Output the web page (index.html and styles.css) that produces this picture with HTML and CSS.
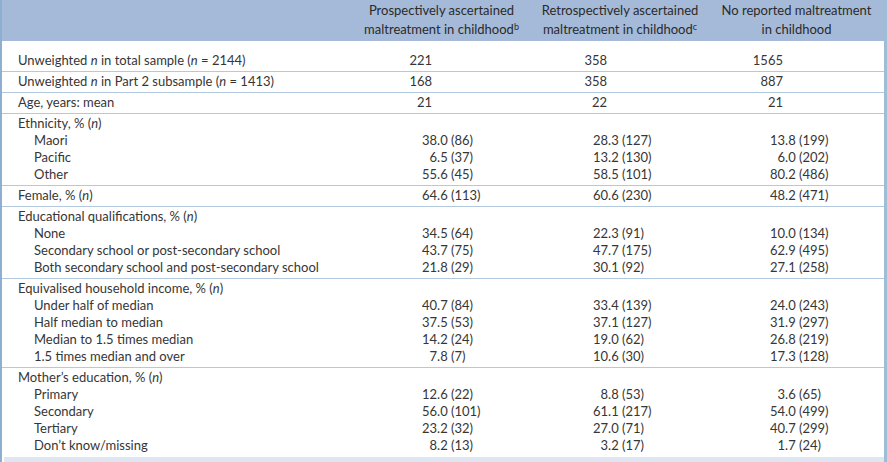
FILE: index.html
```html
<!DOCTYPE html>
<html>
<head>
<meta charset="utf-8">
<link rel="stylesheet" href="styles.css">
</head>
<body>
<div class="frame">
<table class="tbl">
<colgroup><col class="w1"><col class="w2"><col class="w3"><col class="w4"></colgroup>
<thead>
<tr>
<th class="lab"></th>
<th>Prospectively ascertained<br>maltreatment in childhood<sup>b</sup></th>
<th>Retrospectively ascertained<br>maltreatment in childhood<sup>c</sup></th>
<th>No reported maltreatment<br>in childhood</th>
</tr>
</thead>
<tbody>
<tr class="g first"><td class="lab">Unweighted <i>n</i> in total sample (<i>n</i> = 2144)</td><td class="n c2">221</td><td class="n c3">358</td><td class="n c4">1565</td></tr>
<tr class="g"><td class="lab">Unweighted <i>n</i> in Part 2 subsample (<i>n</i> = 1413)</td><td class="n c2">168</td><td class="n c3">358</td><td class="n c4">887</td></tr>
<tr class="g"><td class="lab">Age, years: mean</td><td class="n c2">21</td><td class="n c3">22</td><td class="n c4">21</td></tr>

<tr class="g gs"><td class="lab">Ethnicity, % (<i>n</i>)</td><td></td><td></td><td></td></tr>
<tr class="s"><td class="lab sub">Maori</td><td class="p c2">38.0 (86)</td><td class="p c3">28.3 (127)</td><td class="p c4">13.8 (199)</td></tr>
<tr class="s"><td class="lab sub">Pacific</td><td class="p c2">&#8199;6.5 (37)</td><td class="p c3">13.2 (130)</td><td class="p c4">&#8199;6.0 (202)</td></tr>
<tr class="s se"><td class="lab sub">Other</td><td class="p c2">55.6 (45)</td><td class="p c3">58.5 (101)</td><td class="p c4">80.2 (486)</td></tr>

<tr class="g"><td class="lab">Female, % (<i>n</i>)</td><td class="p c2">64.6 (113)</td><td class="p c3">60.6 (230)</td><td class="p c4">48.2 (471)</td></tr>

<tr class="g gs"><td class="lab">Educational qualifications, % (<i>n</i>)</td><td></td><td></td><td></td></tr>
<tr class="s"><td class="lab sub">None</td><td class="p c2">34.5 (64)</td><td class="p c3">22.3 (91)</td><td class="p c4">10.0 (134)</td></tr>
<tr class="s"><td class="lab sub">Secondary school or post-secondary school</td><td class="p c2">43.7 (75)</td><td class="p c3">47.7 (175)</td><td class="p c4">62.9 (495)</td></tr>
<tr class="s se"><td class="lab sub">Both secondary school and post-secondary school</td><td class="p c2">21.8 (29)</td><td class="p c3">30.1 (92)</td><td class="p c4">27.1 (258)</td></tr>

<tr class="g gs"><td class="lab">Equivalised household income, % (<i>n</i>)</td><td></td><td></td><td></td></tr>
<tr class="s"><td class="lab sub">Under half of median</td><td class="p c2">40.7 (84)</td><td class="p c3">33.4 (139)</td><td class="p c4">24.0 (243)</td></tr>
<tr class="s"><td class="lab sub">Half median to median</td><td class="p c2">37.5 (53)</td><td class="p c3">37.1 (127)</td><td class="p c4">31.9 (297)</td></tr>
<tr class="s"><td class="lab sub">Median to 1.5 times median</td><td class="p c2">14.2 (24)</td><td class="p c3">19.0 (62)</td><td class="p c4">26.8 (219)</td></tr>
<tr class="s se"><td class="lab sub">1.5 times median and over</td><td class="p c2">&#8199;7.8 (7)</td><td class="p c3">10.6 (30)</td><td class="p c4">17.3 (128)</td></tr>

<tr class="g gs"><td class="lab">Mother’s education, % (<i>n</i>)</td><td></td><td></td><td></td></tr>
<tr class="s"><td class="lab sub">Primary</td><td class="p c2">12.6 (22)</td><td class="p c3">&#8199;8.8 (53)</td><td class="p c4">&#8199;3.6 (65)</td></tr>
<tr class="s"><td class="lab sub">Secondary</td><td class="p c2">56.0 (101)</td><td class="p c3">61.1 (217)</td><td class="p c4">54.0 (499)</td></tr>
<tr class="s"><td class="lab sub">Tertiary</td><td class="p c2">23.2 (32)</td><td class="p c3">27.0 (71)</td><td class="p c4">40.7 (299)</td></tr>
<tr class="s se"><td class="lab sub">Don’t know/missing</td><td class="p c2">&#8199;8.2 (13)</td><td class="p c3">&#8199;3.2 (17)</td><td class="p c4">&#8199;1.7 (24)</td></tr>
</tbody>
</table>
<div class="band"></div>
</div>
</body>
</html>
```

FILE: styles.css
```css
html, body {
  margin: 0;
  padding: 0;
  background: #ffffff;
}

.frame {
  width: 887px;
  height: 462px;
  box-sizing: border-box;
  border-left: 2px solid #8fafd0;
  border-right: 3px solid #9ebdd7;
  display: flex;
  flex-direction: column;
  overflow: hidden;
  font-family: "Lato", "Liberation Sans", sans-serif;
  font-size: 13px;
  color: #363636;
}

.tbl {
  width: 882px;
  table-layout: fixed;
  border-collapse: collapse;
  border-spacing: 0;
}

.w1 { width: 350px; }
.w2 { width: 179px; }
.w3 { width: 178px; }
.w4 { width: 175px; }

.tbl th {
  background: #a5bad8;
  color: #2a2a2a;
  font-weight: normal;
  text-align: center;
  line-height: 19px;
  height: 40px;
  padding: 1px 0 2px 0;
  box-sizing: border-box;
  vertical-align: middle;
}

.tbl th sup {
  font-size: 9px;
  line-height: 0;
  vertical-align: 4px;
}

.tbl td {
  padding: 0;
  line-height: 17px;
  white-space: nowrap;
}

.tbl tr.g td {
  padding-top: 1.5px;
  border-top: 1px solid #b3c9df;
}

.tbl tr.first td {
  border-top: none;
  padding-top: 11px;
}

.tbl tr.g:not(.gs) td,
.tbl tr.se td {
  padding-bottom: 1.5px;
}

.lab {
  padding-left: 16px !important;
  text-align: left;
}

.lab.sub {
  padding-left: 32px !important;
}

.n {
  text-align: right;
}
.n.c2 { padding-right: 99px; }
.n.c3 { padding-right: 102px; }
.n.c4 { padding-right: 101px; }

.p {
  text-align: left;
}
.p.c2 { padding-left: 70px; }
.p.c3 { padding-left: 62px; }
.p.c4 { padding-left: 61px; }

.band {
  margin-top: auto;
  height: 5px;
  margin-left: 2px;
  background: #dde6f1;
}
```
